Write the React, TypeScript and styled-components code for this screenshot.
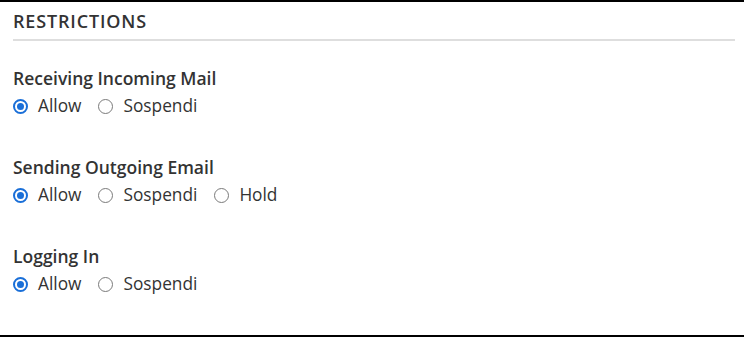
import styled, { createGlobalStyle } from "styled-components";

const GlobalStyle = createGlobalStyle`
  html, body {
    margin: 0;
    padding: 0;
    background: #fff;
  }
  * {
    box-sizing: border-box;
  }
`;

const Panel = styled.div`
  width: 744px;
  height: 337px;
  border-top: 2px solid #000;
  border-bottom: 2px solid #000;
  padding: 7px 9px 0 13px;
  font-family: "Open Sans", "Noto Sans", sans-serif;
  color: #333;
`;

const Heading = styled.h2`
  margin: 0;
  padding-bottom: 6px;
  border-bottom: 2px solid #dedede;
  font-size: 18px;
  line-height: 24px;
  font-weight: 600;
  letter-spacing: 0.85px;
  color: #333;
`;

const Groups = styled.div`
  display: flex;
  flex-direction: column;
  gap: 38px;
  padding-top: 26px;
`;

const Group = styled.fieldset`
  margin: 0;
  padding: 0;
  border: none;
  display: flex;
  flex-direction: column;
  gap: 5px;
`;

const Label = styled.legend`
  padding: 0;
  margin-bottom: 5px;
  font-size: 17.5px;
  line-height: 22px;
  font-weight: 600;
  color: #333;
`;

const Options = styled.div`
  display: flex;
  align-items: center;
  gap: 17px;
  height: 24px;
`;

const Option = styled.label`
  display: flex;
  align-items: center;
  gap: 10px;
  font-size: 17.3px;
  line-height: 24px;
  color: #333;
  cursor: pointer;
`;

const Radio = styled.input.attrs({ type: "radio" })`
  appearance: none;
  flex: none;
  margin: 0;
  width: 15px;
  height: 15px;
  border-radius: 50%;
  border: 1.5px solid #7a7a7a;
  background: #fff;
  display: grid;
  place-items: center;

  &:checked {
    border: 2px solid #1a6fd8;
  }

  &:checked::after {
    content: "";
    width: 7px;
    height: 7px;
    border-radius: 50%;
    background: #1a6fd8;
  }
`;

const restrictions = [
  { name: "incoming", label: "Receiving Incoming Mail", options: ["Allow", "Sospendi"] },
  { name: "outgoing", label: "Sending Outgoing Email", options: ["Allow", "Sospendi", "Hold"] },
  { name: "login", label: "Logging In", options: ["Allow", "Sospendi"] },
];

export default function App() {
  return (
    <>
      <GlobalStyle />
      <Panel>
        <Heading>RESTRICTIONS</Heading>
        <Groups>
          {restrictions.map((r) => (
            <Group key={r.name}>
              <Label>{r.label}</Label>
              <Options>
                {r.options.map((o, idx) => (
                  <Option key={o}>
                    <Radio name={r.name} defaultChecked={idx === 0} />
                    {o}
                  </Option>
                ))}
              </Options>
            </Group>
          ))}
        </Groups>
      </Panel>
    </>
  );
}
